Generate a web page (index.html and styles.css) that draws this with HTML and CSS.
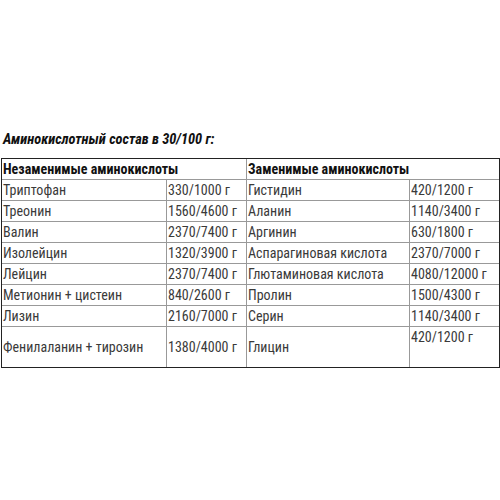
FILE: index.html
```html
<!DOCTYPE html>
<html lang="ru">
<head>
<meta charset="utf-8">
<link rel="stylesheet" href="styles.css">
</head>
<body>
<div class="page">
  <p class="title">Аминокислотный состав в 30/100 г:</p>
  <table class="amino">
    <colgroup>
      <col class="c1"><col class="c2"><col class="c3"><col class="c4">
    </colgroup>
    <tr class="head">
      <th colspan="2">Незаменимые аминокислоты</th>
      <th colspan="2">Заменимые аминокислоты</th>
    </tr>
    <tr><td>Триптофан</td><td>330/1000 г</td><td>Гистидин</td><td>420/1200 г</td></tr>
    <tr><td>Треонин</td><td>1560/4600 г</td><td>Аланин</td><td>1140/3400 г</td></tr>
    <tr><td>Валин</td><td>2370/7400 г</td><td>Аргинин</td><td>630/1800 г</td></tr>
    <tr><td>Изолейцин</td><td>1320/3900 г</td><td>Аспарагиновая кислота</td><td>2370/7000 г</td></tr>
    <tr><td>Лейцин</td><td>2370/7400 г</td><td>Глютаминовая кислота</td><td>4080/12000 г</td></tr>
    <tr><td>Метионин + цистеин</td><td>840/2600 г</td><td>Пролин</td><td>1500/4300 г</td></tr>
    <tr><td>Лизин</td><td>2160/7000 г</td><td>Серин</td><td>1140/3400 г</td></tr>
    <tr><td>Фенилаланин + тирозин</td><td>1380/4000 г</td><td>Глицин</td><td>420/1200 г<br>&nbsp;</td></tr>
  </table>
</div>
</body>
</html>
```
FILE: styles.css
```css
html, body {
  margin: 0;
  padding: 0;
  background: #fff;
}
.page {
  padding: 130px 2px 0 1px;
  font-family: "Roboto Condensed", Roboto, "Liberation Sans", sans-serif;
  font-stretch: condensed;
  color: #3a3a3a;
}
.title {
  margin: 0 0 8px 2px;
  font-size: 14.4px;
  line-height: 20px;
  font-weight: bold;
  font-style: italic;
  color: #111;
}
.amino {
  width: 497px;
  table-layout: fixed;
  border-collapse: separate;
  border-spacing: 0;
  border: 1px solid #222;
  font-size: 14px;
  line-height: 20px;
}
.c1 { width: 165px; }
.c2 { width: 80px; }
.c3 { width: 163px; }
.c4 { width: 89px; }
.amino th, .amino td {
  padding: 0 0 0 1px;
  text-align: left;
  vertical-align: middle;
  border-right: 1px solid #999;
  border-bottom: 1px solid #999;
  white-space: nowrap;
}
.amino tr > :last-child { border-right: none; }
.amino tr:last-child > * { border-bottom: none; }
.amino td:last-child { vertical-align: top; }
.amino th {
  font-weight: bold;
  color: #111;
}
```
